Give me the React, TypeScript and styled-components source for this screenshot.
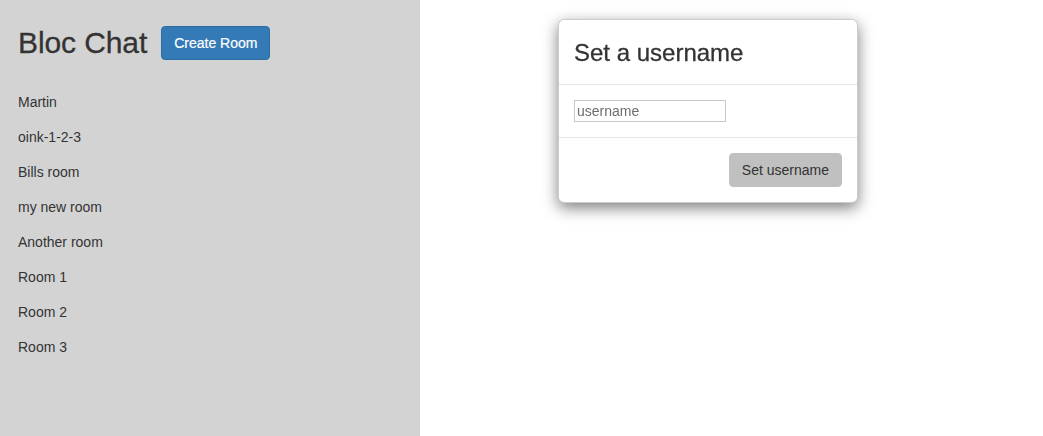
import React from "react";
import styled, { createGlobalStyle } from "styled-components";

const GlobalStyle = createGlobalStyle`
  html, body {
    margin: 0;
    padding: 0;
    background: #ffffff;
  }
  body {
    font-family: "Liberation Sans", Arial, Helvetica, sans-serif;
    font-size: 14px;
    line-height: 1.42857;
    color: #333333;
  }
  * { box-sizing: border-box; }
`;

const Page = styled.div`
  display: flex;
  height: 436px;
  width: 100%;
  overflow: hidden;
`;

const Sidebar = styled.aside`
  width: 420px;
  flex: 0 0 420px;
  height: 100%;
  background: #d3d3d3;
  padding: 26px 18px 0 18px;
  display: flex;
  flex-direction: column;
`;

const HeaderRow = styled.div`
  display: flex;
  align-items: center;
  gap: 14px;
  height: 34px;
`;

const Title = styled.h1`
  margin: 0;
  font-size: 30px;
  font-weight: 400;
  line-height: 34px;
  color: #333333;
  letter-spacing: -0.1px;
  -webkit-text-stroke: 0.3px #333333;
`;

const PrimaryButton = styled.button`
  font-family: inherit;
  font-size: 14px;
  line-height: 20px;
  height: 34px;
  padding: 6px 12px;
  color: #ffffff;
  background: #337ab7;
  border: 1px solid #2e6da4;
  border-radius: 4px;
  cursor: pointer;
  -webkit-text-stroke: 0.2px #ffffff;
`;

const RoomList = styled.ul`
  list-style: none;
  margin: 32px 0 0 0;
  padding: 0;
  display: flex;
  flex-direction: column;
  gap: 15px;
`;

const RoomItem = styled.li`
  font-size: 14px;
  line-height: 20px;
  color: #333333;
`;

const Main = styled.main`
  flex: 1;
  height: 100%;
  background: #ffffff;
`;

const Dialog = styled.div`
  position: fixed;
  left: 558px;
  top: 19px;
  width: 300px;
  background: #ffffff;
  border: 1px solid rgba(0, 0, 0, 0.2);
  border-radius: 6px;
  box-shadow: 0 5px 15px rgba(0, 0, 0, 0.5);
  display: flex;
  flex-direction: column;
`;

const DialogHeader = styled.div`
  padding: 15px;
  border-bottom: 1px solid #e5e5e5;
`;

const DialogTitle = styled.h2`
  margin: 0;
  font-size: 24px;
  font-weight: 400;
  line-height: 34px;
  color: #333333;
  padding-top: 1px;
  height: 34px;
  -webkit-text-stroke: 0.3px #333333;
`;

const DialogBody = styled.div`
  padding: 15px;
  border-bottom: 1px solid #e5e5e5;
  display: flex;
`;

const TextInput = styled.input`
  width: 152px;
  height: 22px;
  padding: 1px 2px;
  font-family: "Liberation Sans", Arial, sans-serif;
  font-size: 14px;
  color: #333333;
  border: 1px solid #c8c8c8;
  border-radius: 0;
  outline: none;
  &::placeholder {
    color: #6e6e6e;
  }
`;

const DialogFooter = styled.div`
  padding: 15px;
  display: flex;
  justify-content: flex-end;
`;

const GreyButton = styled.button`
  font-family: inherit;
  font-size: 14px;
  line-height: 20px;
  height: 34px;
  padding: 6px 12px;
  color: #333333;
  background: #c0c0c0;
  border: 1px solid #c0c0c0;
  border-radius: 4px;
  cursor: pointer;
`;

const rooms = [
  "Martin",
  "oink-1-2-3",
  "Bills room",
  "my new room",
  "Another room",
  "Room 1",
  "Room 2",
  "Room 3",
];

export default function App() {
  return (
    <>
      <GlobalStyle />
      <Page>
        <Sidebar>
          <HeaderRow>
            <Title>Bloc Chat</Title>
            <PrimaryButton>Create Room</PrimaryButton>
          </HeaderRow>
          <RoomList>
            {rooms.map((r) => (
              <RoomItem key={r}>{r}</RoomItem>
            ))}
          </RoomList>
        </Sidebar>
        <Main />
      </Page>
      <Dialog role="dialog">
        <DialogHeader>
          <DialogTitle>Set a username</DialogTitle>
        </DialogHeader>
        <DialogBody>
          <TextInput placeholder="username" />
        </DialogBody>
        <DialogFooter>
          <GreyButton>Set username</GreyButton>
        </DialogFooter>
      </Dialog>
    </>
  );
}
